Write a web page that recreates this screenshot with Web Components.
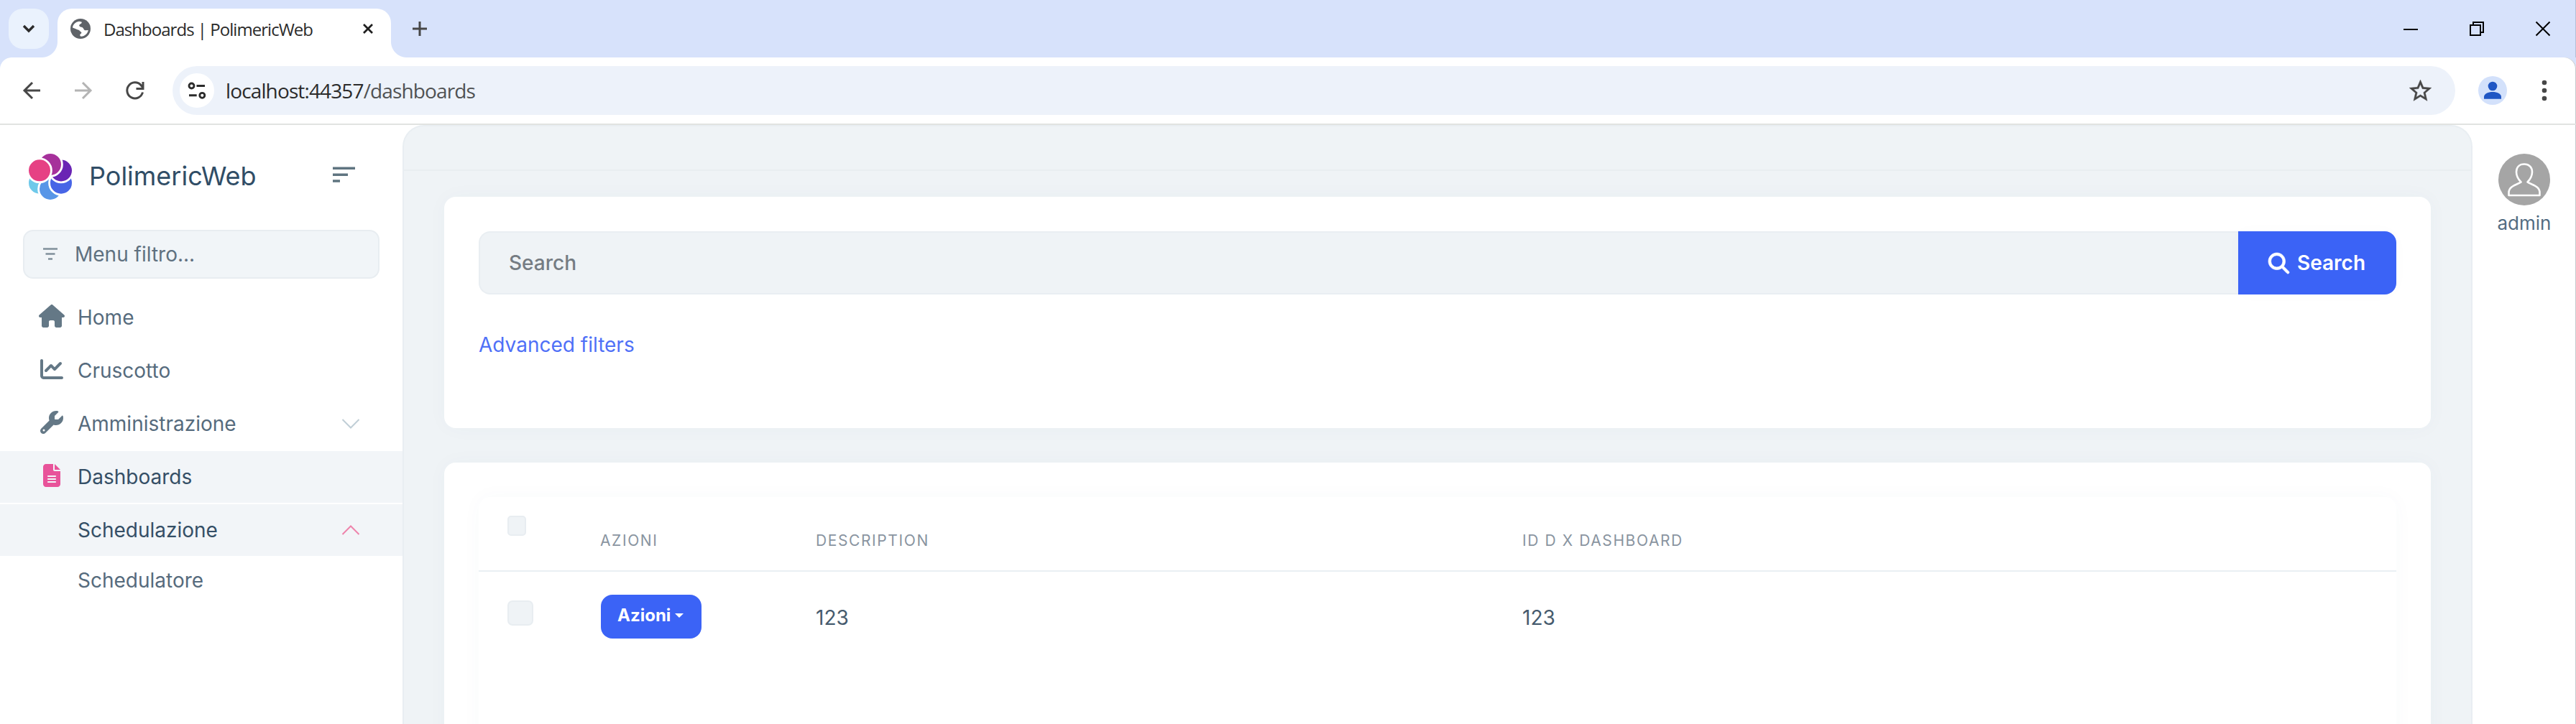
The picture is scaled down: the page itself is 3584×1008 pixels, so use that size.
<!DOCTYPE html>
<html lang="it">
<head>
<meta charset="utf-8">
<title>Dashboards | PolimericWeb</title>
<style>
  body {
    margin: 0;
    height: 1008px;
    overflow: hidden;
    background: #fff;
    font-family: Inter, sans-serif;
    font-size: 28px;
    line-height: 40px;
    color: #445b6e;
  }
</style>
</head>
<body>
<browser-window>
  <tab-strip slot="tabs">Dashboards | PolimericWeb</tab-strip>
  <tool-bar slot="toolbar">localhost:44357<span slot="path">/dashboards</span></tool-bar>

  <side-menu>
    <span slot="brand">PolimericWeb</span>
    <menu-item icon="home">Home</menu-item>
    <menu-item icon="chart">Cruscotto</menu-item>
    <menu-item icon="wrench" arrow="down">Amministrazione</menu-item>
    <menu-item icon="file" active>Dashboards</menu-item>
    <menu-item arrow="up" active>Schedulazione</menu-item>
    <menu-item sub>Schedulatore</menu-item>
  </side-menu>

  <main-area>
    <content-card>
      <search-box></search-box>
    </content-card>
    <content-card class="list">
      <data-table>
        <span slot="head">Azioni</span>
        <span slot="head">Description</span>
        <span slot="head">Id D X Dashboard</span>
        <table-row><span slot="description">123</span><span slot="id">123</span></table-row>
      </data-table>
    </content-card>
  </main-area>

  <user-panel>admin</user-panel>
</browser-window>

<script>
const icons = {
  home: ['0 0 576 512', '<path d="M575.8 255.5c0 18-15 32.1-32 32.1h-32l.7 160.2c0 2.7-.2 5.4-.5 8.1V472c0 22.1-17.9 40-40 40H456c-1.1 0-2.2 0-3.3-.1c-1.4 .1-2.8 .1-4.2 .1H416 392c-22.1 0-40-17.9-40-40V448 384c0-17.7-14.3-32-32-32H256c-17.7 0-32 14.3-32 32v64 24c0 22.1-17.9 40-40 40H160 128.1c-1.5 0-3-.1-4.5-.2c-1.2 .1-2.4 .2-3.6 .2H104c-22.1 0-40-17.9-40-40V360c0-.9 0-1.9 .1-2.8V287.6H32c-18 0-32-14-32-32.1c0-9 3-17 10-24L266.4 8c7-7 15-8 22-8s15 2 21 7L564.8 231.5c8 7 12 15 11 24z"/>'],
  chart: ['0 0 512 512', '<path d="M64 64c0-17.7-14.3-32-32-32S0 46.3 0 64V400c0 44.2 35.8 80 80 80H480c17.7 0 32-14.3 32-32s-14.3-32-32-32H80c-8.8 0-16-7.2-16-16V64zm406.6 86.6c12.5-12.5 12.5-32.8 0-45.3s-32.8-12.5-45.3 0L320 210.7l-57.4-57.4c-12.5-12.5-32.8-12.5-45.3 0l-112 112c-12.5 12.5-12.5 32.8 0 45.3s32.8 12.5 45.3 0L240 221.3l57.4 57.4c12.5 12.5 32.8 12.5 45.3 0l128-128z"/>'],
  wrench: ['0 0 512 512', '<path d="M352 320c88.4 0 160-71.6 160-160c0-15.3-2.2-30.1-6.2-44.2c-3.1-10.8-16.4-13.2-24.3-5.3l-76.8 76.8c-3 3-7.1 4.7-11.3 4.7H336c-8.8 0-16-7.2-16-16V118.6c0-4.2 1.7-8.3 4.7-11.3l76.8-76.8c7.9-7.9 5.4-21.2-5.3-24.3C382.1 2.2 367.3 0 352 0C263.6 0 192 71.6 192 160c0 19.1 3.4 37.5 9.5 54.5L19.9 396.1C7.2 408.8 0 426.1 0 444.1C0 481.6 30.4 512 67.9 512c18 0 35.3-7.2 48-19.9L297.5 310.5c17 6.2 35.4 9.5 54.5 9.5zM80 408a24 24 0 1 1 0 48 24 24 0 1 1 0-48z"/>'],
  file: ['0 0 384 512', '<path d="M64 0C28.7 0 0 28.7 0 64V448c0 35.3 28.7 64 64 64H320c35.3 0 64-28.7 64-64V160H256c-17.7 0-32-14.3-32-32V0H64zM256 0V128H384L256 0zM112 256H272c8.8 0 16 7.2 16 16s-7.2 16-16 16H112c-8.8 0-16-7.2-16-16s7.2-16 16-16zm0 64H272c8.8 0 16 7.2 16 16s-7.2 16-16 16H112c-8.8 0-16-7.2-16-16s7.2-16 16-16zm0 64H272c8.8 0 16 7.2 16 16s-7.2 16-16 16H112c-8.8 0-16-7.2-16-16s7.2-16 16-16z"/>'],
  search: ['0 0 512 512', '<path stroke="currentColor" stroke-width="12" d="M416 208c0 45.9-14.9 88.3-40 122.7L502.6 457.4c12.5 12.5 12.5 32.8 0 45.3s-32.8 12.5-45.3 0L330.7 376c-34.4 25.2-76.8 40-122.7 40C93.1 416 0 322.9 0 208S93.1 0 208 0S416 93.1 416 208zM208 352a144 144 0 1 0 0-288 144 144 0 1 0 0 288z"/>'],
  down: ['0 0 28 16', '<path class="l" d="M2.5 2L14 13.5 25.5 2" stroke-width="2"/>'],
  up: ['0 0 28 16', '<path class="l" d="M2.5 14L14 2.5 25.5 14" stroke-width="2"/>'],
  menu: ['0 0 31 20', '<path class="l" d="M0 2.2h31M0 11.2h21M0 20h10" stroke-width="3.6"/>'],
  filter: ['0 0 20 18', '<path class="l" d="M0 2.5h20M3.5 9.5h13M7 16.5h6" stroke-width="2.6"/>'],
  logo: ['39 212 62 67', `<g stroke="#fff" stroke-width="2.8">
    <circle cx="55" cy="254.7" r="16.4" fill="#6fc9ea"/><circle cx="70" cy="263" r="16.4" fill="#5896e7"/>
    <circle cx="85" cy="254.7" r="16.4" fill="#4765e6"/><circle cx="85" cy="237.5" r="16.4" fill="#6a24b4"/>
    <circle cx="70" cy="228.9" r="16.4" fill="#a6319b"/><circle cx="55" cy="237.3" r="16.4" fill="#e64184"/></g>`],
  caret: ['0 0 18 12', '<path class="l" d="M2 2l7 7 7-7" stroke-width="3.4"/>'],
  globe: ['0 0 28 28', '<circle cx="14" cy="14" r="14"/><path d="M3 12.5C3.5 8 7 4.5 12 3.8L15.5 4.5C16.5 6.5 14 7 12.5 8.5 11.5 10 13 11.5 15.5 11.8 18.5 12.5 18 15.8 20.5 16.3L24.8 16C24 20.5 20 24.5 15 24.8 12.5 24 13 21.5 15 20.5 16.5 19 14 18.5 13 17 12 15 9.5 15.5 7.5 14.2z" fill="#fff"/>'],
  cross: ['0 0 16 16', '<path class="l" d="M2 2l12 12M14 2L2 14" stroke-width="2.7"/>'],
  plus: ['0 0 20 20', '<path class="l" d="M10 0v20M0 10h20" stroke-width="3"/>'],
  minimize: ['0 0 20 20', '<path class="l" d="M0 11h20" stroke-width="2"/>'],
  restore: ['0 0 20 20', '<path class="l" d="M1 5h14v14H1zM5 5V1h14v14h-4" stroke-width="2"/>'],
  close: ['0 0 20 20', '<path class="l" d="M.5.5l19 19M19.5.5l-19 19" stroke-width="2"/>'],
  back: ['0 0 24 24', '<path class="l" d="M24 12H2M13 1L2 12l11 11" stroke-width="3"/>'],
  forward: ['0 0 24 24', '<path class="l" d="M0 12h22M11 1l11 11-11 11" stroke-width="3"/>'],
  reload: ['0 0 28 28', '<path class="l" d="M24.5 16.5A11 11 0 1 1 22 6.5L24.5 9.5M25 2v9.5h-9.500" stroke-width="3"/>'],
  tune: ['0 0 24 24', '<path class="l" d="M11.5 5.5H23M1 18.8h10.7" stroke-width="3"/><circle class="l" cx="4.5" cy="5.5" r="3.5" stroke-width="2.8"/><circle class="l" cx="19.3" cy="18.8" r="3.5" stroke-width="2.8"/>'],
  star: ['0 0 24 24', '<path stroke="currentColor" stroke-width=".25" d="M22 9.24l-7.19-.62L12 2 9.19 8.63 2 9.24l5.46 4.73L5.82 21 12 17.27 18.18 21l-1.63-7.03L22 9.24zM12 15.4l-3.76 2.27 1-4.28-3.32-2.88 4.38-.38L12 6.1l1.71 4.04 4.38.38-3.32 2.88 1 4.28L12 15.4z"/>'],
  profile: ['0 0 40 40', '<circle cx="20" cy="20" r="20" fill="#d3e1fb"/><circle cx="20" cy="14" r="6.3"/><path d="M8 31.7v-2.8c0-4.8 6-7 12-7s12 2.2 12 7v2.8z"/>'],
  dots: ['0 0 8 30', '<circle cx="4" cy="4" r="3.3"/><circle cx="4" cy="15" r="3.3"/><circle cx="4" cy="26" r="3.3"/>'],
  avatar: ['0 0 72 72', '<circle cx="36" cy="36" r="36" fill="#a5a5a5"/><path d="M36 14.5c-7 0-11 4.5-11 11 0 6 3 10.5 6.5 14-4.5 3.5-17 5-17 14.5v4h43v-4c0-9.5-12.5-11-17-14.5 3.5-3.5 6.5-8 6.5-14 0-6.5-4-11-11-11z" fill="none" stroke="#fff" stroke-width="2.6" stroke-linejoin="round"/>'],
};

function define(name, html) {
  const template = document.createElement('template');
  template.innerHTML = html;
  customElements.define(name, class extends HTMLElement {
    constructor() {
      super();
      this.attachShadow({ mode: 'open' }).appendChild(template.content.cloneNode(true));
    }
  });
}

class UiIcon extends HTMLElement {
  constructor() {
    super();
    this.attachShadow({ mode: 'open' });
  }

  connectedCallback() {
    const [viewBox, body] = icons[this.getAttribute('name')];
    this.shadowRoot.innerHTML = `
      <style>
        :host { display: block; flex: none; }
        svg { display: block; width: 100%; height: 100%; fill: currentColor; overflow: visible; }
        .l { fill: none; stroke: currentColor; }
      </style>
      <svg viewBox="${viewBox}">${body}</svg>
    `;
  }
}
customElements.define('ui-icon', UiIcon);

define('browser-window', `
  <style>
    :host { display: flex; flex-direction: column; height: 1008px; background: #d7e2fb; }
    .page {
      flex: 1;
      min-height: 0;
      display: grid;
      grid-template-columns: 560px 1fr 144px;
      background: #fff;
      box-shadow: inset -1px 0 #c6c8cc;
    }
  </style>
  <slot name="tabs"></slot>
  <slot name="toolbar"></slot>
  <div class="page"><slot></slot></div>
`);

define('tab-strip', `
  <style>
    :host {
      display: flex;
      align-items: center;
      height: 80px;
      padding: 0 36px 0 12px;
      box-sizing: border-box;
      font-family: "Open Sans", sans-serif;
      font-size: 24px;
      letter-spacing: -0.97px;
      color: #2b2b2b;
      box-shadow: inset -1px 0 #b5bfd6;
    }
    .list { display: grid; place-items: center; width: 56px; height: 56px; border-radius: 20px; background: #eaf2fd; }
    .list ui-icon { width: 18px; height: 12px; }
    .tab {
      position: relative;
      display: flex;
      align-items: center;
      align-self: flex-end;
      width: 464px;
      height: 68px;
      margin-left: 12px;
      padding: 0 24px 12px 18px;
      box-sizing: border-box;
      background: #fff;
      border-radius: 20px 20px 0 0;
    }
    .tab::before, .tab::after { content: ""; position: absolute; bottom: 0; width: 22px; height: 22px; }
    .tab::before { right: 100%; background: radial-gradient(circle at 0 0, transparent 21.5px, #fff 22.5px); }
    .tab::after { left: 100%; background: radial-gradient(circle at 100% 0, transparent 21.5px, #fff 22.5px); }
    .globe { width: 28px; height: 28px; color: #5f6368; }
    .title { flex: 1; margin: 2px 0 0 18px; white-space: nowrap; }
    .x { width: 16px; height: 16px; color: #1f1f1f; }
    .plus { width: 20px; height: 20px; margin: 0 auto 0 30px; color: #474747; }
    .win { width: 20px; height: 20px; margin-left: 72px; color: #000; }
  </style>
  <div class="list"><ui-icon name="caret"></ui-icon></div>
  <div class="tab">
    <ui-icon class="globe" name="globe"></ui-icon>
    <span class="title"><slot></slot></span>
    <ui-icon class="x" name="cross"></ui-icon>
  </div>
  <ui-icon class="plus" name="plus"></ui-icon>
  <ui-icon class="win" name="minimize"></ui-icon>
  <ui-icon class="win" name="restore"></ui-icon>
  <ui-icon class="win" name="close"></ui-icon>
`);

define('tool-bar', `
  <style>
    :host {
      display: flex;
      align-items: center;
      height: 94px;
      padding: 0 40px 0 32px;
      box-sizing: border-box;
      background: #fff;
      border-bottom: 2px solid #e1e3e1;
      border-radius: 16px 16px 0 0;
      box-shadow: inset -1px 0 #c6c8cc;
      font-family: "Open Sans", sans-serif;
      letter-spacing: -0.87px;
      color: #2b2b2b;
    }
    .nav { width: 24px; height: 24px; color: #474747; }
    .forward { margin-left: 48px; color: #b4b4b4; }
    .reload { width: 28px; height: 28px; margin-left: 46px; color: #474747; }
    .address {
      flex: 1;
      display: flex;
      align-items: center;
      height: 68px;
      margin: 0 32px 0 38px;
      padding: 0 30px 0 10px;
      box-sizing: border-box;
      border-radius: 34px;
      background: #edf2fa;
    }
    .site { display: grid; place-items: center; width: 48px; height: 48px; border-radius: 50%; background: #fff; }
    .site ui-icon { width: 24px; height: 24px; }
    .url { flex: 1; margin-left: 16px; padding-bottom: 1px; }
    ::slotted(span) { color: #505254; }
    .star { width: 37px; height: 37px; color: #474747; }
    .profile { width: 40px; height: 40px; color: #1f56c4; }
    .dots { width: 8px; height: 30px; margin-left: 48px; color: #474747; }
  </style>
  <ui-icon class="nav" name="back"></ui-icon>
  <ui-icon class="nav forward" name="forward"></ui-icon>
  <ui-icon class="reload" name="reload"></ui-icon>
  <div class="address">
    <span class="site"><ui-icon name="tune"></ui-icon></span>
    <span class="url"><slot></slot><slot name="path"></slot></span>
    <ui-icon class="star" name="star"></ui-icon>
  </div>
  <ui-icon class="profile" name="profile"></ui-icon>
  <ui-icon class="dots" name="dots"></ui-icon>
`);

define('side-menu', `
  <style>
    :host { display: flex; flex-direction: column; }
    header { display: flex; align-items: center; height: 142px; padding: 0 66px 0 39px; }
    .logo { width: 62px; height: 67px; }
    .brand { flex: 1; margin-left: 23px; font-size: 36px; color: #304d66; }
    .toggle { width: 31px; height: 20px; margin-bottom: 6px; color: #5f7480; }
    .filter {
      display: flex;
      align-items: center;
      gap: 24px;
      height: 68px;
      margin: 4px 32px 18px;
      padding: 0 26px;
      box-sizing: border-box;
      border: 2px solid #e8edf1;
      border-radius: 14px;
      background: #f1f5f8;
      color: #5f7180;
    }
    .filter ui-icon { width: 20px; height: 18px; margin-bottom: 2px; color: #80909b; }
    nav { display: flex; flex-direction: column; gap: 2px; }
  </style>
  <header>
    <ui-icon class="logo" name="logo"></ui-icon>
    <span class="brand"><slot name="brand"></slot></span>
    <ui-icon class="toggle" name="menu"></ui-icon>
  </header>
  <div class="filter"><ui-icon name="filter"></ui-icon>Menu filtro...</div>
  <nav><slot></slot></nav>
`);

class MenuItem extends HTMLElement {
  constructor() {
    super();
    this.attachShadow({ mode: 'open' });
  }

  connectedCallback() {
    const icon = this.getAttribute('icon');
    const arrow = this.getAttribute('arrow');
    this.shadowRoot.innerHTML = `
      <style>
        :host {
          display: flex;
          align-items: center;
          height: 72px;
          padding: 0 58px 0 54px;
          box-sizing: border-box;
          color: #566b7d;
        }
        :host([active]) { background: #f2f5f8; color: #354f66; }
        :host([sub]) { height: 64px; }
        .icon { display: flex; justify-content: center; width: 36px; margin: 0 18px 4px 0; color: #647886; }
        :host([active]) .icon { color: #e8539a; }
        .icon ui-icon { width: 36px; height: 32px; }
        .label { flex: 1; }
        .arrow { width: 28px; height: 16px; color: #c0ced6; }
        :host([active]) .arrow { color: #ee83ab; }
      </style>
      <span class="icon">${icon ? `<ui-icon name="${icon}"></ui-icon>` : ''}</span>
      <span class="label"><slot></slot></span>
      ${arrow ? `<ui-icon class="arrow" name="${arrow}"></ui-icon>` : ''}
    `;
  }
}
customElements.define('menu-item', MenuItem);

define('main-area', `
  <style>
    :host {
      display: flex;
      flex-direction: column;
      min-height: 0;
      overflow: hidden;
      border: 2px solid #e9eef2;
      border-bottom: 0;
      border-radius: 30px 30px 0 0;
      background: #eff3f6;
    }
    .top { flex: none; height: 60px; border-bottom: 2px solid #e9eef1; }
    .content { display: flex; flex-direction: column; gap: 48px; padding: 36px 56px 0; }
  </style>
  <div class="top"></div>
  <div class="content"><slot></slot></div>
`);

define('content-card', `
  <style>
    :host {
      display: block;
      height: 322px;
      padding: 48px;
      box-sizing: border-box;
      border-radius: 16px;
      background: #fff;
      box-shadow: 0 0 28px rgba(76, 100, 120, 0.03);
    }
    :host(.list) { height: 500px; }
  </style>
  <slot></slot>
`);

define('search-box', `
  <style>
    :host { display: block; }
    .group { display: flex; height: 88px; }
    .field {
      flex: 1;
      display: flex;
      align-items: center;
      padding: 0 40px;
      border: 2px solid #e9eef2;
      border-right: 0;
      border-radius: 16px 0 0 16px;
      background: #eff3f6;
      font-weight: 500;
      color: #757c83;
    }
    button {
      display: flex;
      align-items: center;
      gap: 11px;
      width: 220px;
      padding: 0 42px;
      border: 0;
      border-radius: 0 16px 16px 0;
      background: #3b63f6;
      font: inherit;
      font-weight: 600;
      color: #fff;
      box-shadow: 0 0 28px rgba(0, 0, 0, 0.015);
    }
    button ui-icon { width: 29px; height: 29px; }
    a { display: block; margin-top: 49px; line-height: 43px; color: #4f70f7; }
  </style>
  <div class="group">
    <div class="field">Search</div>
    <button><ui-icon name="search"></ui-icon>Search</button>
  </div>
  <a>Advanced filters</a>
`);

define('data-table', `
  <style>
    :host { display: block; height: 420px; border-radius: 16px; box-shadow: 0 0 28px rgba(76, 100, 120, 0.03); }
    .head {
      display: grid;
      grid-template-columns: 129px 300px 983px 1fr;
      align-items: center;
      height: 104px;
      padding-left: 40px;
      box-sizing: border-box;
      border-bottom: 2px solid #e9eff3;
      font-size: 21px;
      letter-spacing: 1.6px;
      text-transform: uppercase;
      color: #8994a0;
    }
    .check {
      width: 26px;
      height: 28px;
      margin-bottom: 22px;
      box-sizing: border-box;
      border: 2px solid #e8edf1;
      border-radius: 5px;
      background: #eff3f6;
    }
    ::slotted(span) { padding-top: 20px; }
  </style>
  <div class="head"><i class="check"></i><slot name="head"></slot></div>
  <slot></slot>
`);

define('table-row', `
  <style>
    :host {
      display: grid;
      grid-template-columns: 130px 299px 983px 1fr;
      align-items: center;
      height: 124px;
      padding-left: 40px;
      color: #465b6e;
    }
    .check {
      width: 36px;
      height: 35px;
      margin-bottom: 10px;
      box-sizing: border-box;
      border: 2px solid #e8edf1;
      border-radius: 7px;
      background: #eff3f6;
    }
    button {
      display: flex;
      align-items: center;
      gap: 6px;
      width: 140px;
      height: 61px;
      padding: 0 0 2px 23px;
      border: 0;
      border-radius: 16px;
      background: #3b63f6;
      font: inherit;
      font-size: 24px;
      font-weight: 700;
      color: #fff;
    }
    button::after { content: ""; border: 6px solid transparent; border-top-color: #fff; border-bottom: 0; }
    ::slotted(span) { padding-top: 3px; }
  </style>
  <i class="check"></i>
  <button>Azioni</button>
  <slot name="description"></slot>
  <slot name="id"></slot>
`);

define('user-panel', `
  <style>
    :host {
      display: flex;
      flex-direction: column;
      align-items: center;
      gap: 5px;
      padding-top: 40px;
      font-size: 26px;
      color: #526c82;
    }
    ui-icon { width: 72px; height: 72px; }
  </style>
  <ui-icon name="avatar"></ui-icon>
  <slot></slot>
`);
</script>
</body>
</html>
